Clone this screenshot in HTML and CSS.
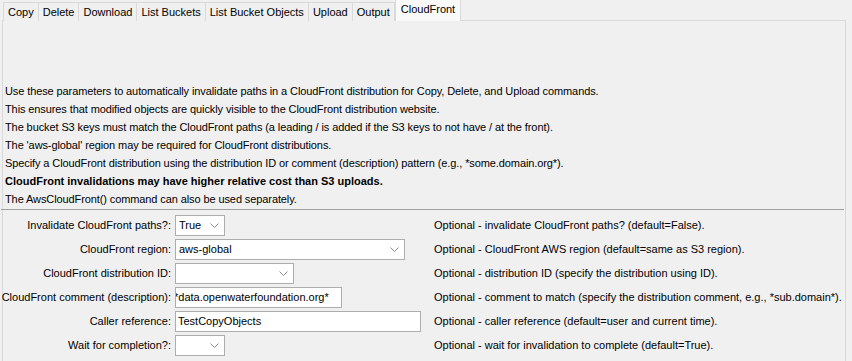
FILE: index.html
```html
<!DOCTYPE html>
<html>
<head>
<meta charset="utf-8">
<link rel="stylesheet" href="styles.css">
</head>
<body>
<div class="tabs">
  <div class="tab">Copy</div>
  <div class="tab">Delete</div>
  <div class="tab">Download</div>
  <div class="tab">List Buckets</div>
  <div class="tab">List Bucket Objects</div>
  <div class="tab">Upload</div>
  <div class="tab">Output</div>
  <div class="tab selected">CloudFront</div>
</div>
<div class="panel">
  <div class="notes">
    <div class="line">Use these parameters to automatically invalidate paths in a CloudFront distribution for Copy, Delete, and Upload commands.</div>
    <div class="line">This ensures that modified objects are quickly visible to the CloudFront distribution website.</div>
    <div class="line">The bucket S3 keys must match the CloudFront paths (a leading / is added if the S3 keys to not have / at the front).</div>
    <div class="line">The 'aws-global' region may be required for CloudFront distributions.</div>
    <div class="line">Specify a CloudFront distribution using the distribution ID or comment (description) pattern (e.g., *some.domain.org*).</div>
    <div class="line bold">CloudFront invalidations may have higher relative cost than S3 uploads.</div>
    <div class="line">The AwsCloudFront() command can also be used separately.</div>
  </div>
  <div class="form">
    <div class="label">Invalidate CloudFront paths?:</div>
    <div class="field"><div class="combo w-small"><span class="val">True</span><svg class="chev" width="9" height="5" viewBox="0 0 9 5"><polyline points="0.5,0.5 4.5,4.5 8.5,0.5" fill="none" stroke="#8c8c8c" stroke-width="1"/></svg></div></div>
    <div class="desc">Optional - invalidate CloudFront paths? (default=False).</div>

    <div class="label">CloudFront region:</div>
    <div class="field"><div class="combo w-region"><span class="val">aws-global</span><svg class="chev" width="9" height="5" viewBox="0 0 9 5"><polyline points="0.5,0.5 4.5,4.5 8.5,0.5" fill="none" stroke="#8c8c8c" stroke-width="1"/></svg></div></div>
    <div class="desc">Optional - CloudFront AWS region (default=same as S3 region).</div>

    <div class="label">CloudFront distribution ID:</div>
    <div class="field"><div class="combo w-dist"><span class="val"></span><svg class="chev" width="9" height="5" viewBox="0 0 9 5"><polyline points="0.5,0.5 4.5,4.5 8.5,0.5" fill="none" stroke="#8c8c8c" stroke-width="1"/></svg></div></div>
    <div class="desc">Optional - distribution ID (specify the distribution using ID).</div>

    <div class="label">CloudFront comment (description):</div>
    <div class="field"><div class="text w-comment"><span class="scrolled">*data.openwaterfoundation.org*</span></div></div>
    <div class="desc">Optional - comment to match (specify the distribution comment, e.g., *sub.domain*).</div>

    <div class="label">Caller reference:</div>
    <div class="field"><div class="text w-caller"><span>TestCopyObjects</span></div></div>
    <div class="desc">Optional - caller reference (default=user and current time).</div>

    <div class="label">Wait for completion?:</div>
    <div class="field"><div class="combo w-small"><span class="val"></span><svg class="chev" width="9" height="5" viewBox="0 0 9 5"><polyline points="0.5,0.5 4.5,4.5 8.5,0.5" fill="none" stroke="#8c8c8c" stroke-width="1"/></svg></div></div>
    <div class="desc">Optional - wait for invalidation to complete (default=True).</div>
  </div>
</div>
</body>
</html>
```
FILE: styles.css
```css
html, body {
  margin: 0;
  padding: 0;
  background: #f0f0f0;
  width: 852px;
  height: 361px;
  overflow: hidden;
  font-family: "Liberation Sans", Arial, sans-serif;
  font-size: 11px;
  color: #000;
}

.tabs {
  display: flex;
  align-items: flex-end;
  height: 21px;
  padding-left: 3px;
  position: relative;
  z-index: 2;
}

.tab {
  height: 18px;
  line-height: 18px;
  padding: 0 4px;
  border: 1px solid #d9d9d9;
  border-bottom: none;
  border-left: none;
  background: #f0f0f0;
  white-space: nowrap;
}

.tab:first-child {
  border-left: 1px solid #d9d9d9;
}

.tab.selected {
  height: 21px;
  line-height: 19px;
  background: #f9f9f9;
  border-left: 1px solid #d9d9d9;
  padding: 0 5px;
}

.panel {
  margin: -1px 6px 0 2px;
  border: 1px solid #d9d9d9;
  border-bottom: none;
  height: 340px;
  position: relative;
  z-index: 1;
}

.notes {
  padding: 61px 0 0 2px;
  height: 127px;
}

.line {
  height: 18px;
  line-height: 18px;
  white-space: nowrap;
  letter-spacing: -0.1px;
}

.line.bold {
  font-weight: bold;
  letter-spacing: 0;
}

.form {
  border-top: 1px solid #a0a0a0;
  margin-left: -2px;
  margin-right: 1px;
  padding-top: 3px;
  display: grid;
  grid-template-columns: 170px 255px 1fr;
  column-gap: 4px;
  grid-auto-rows: 24px;
}

.label {
  text-align: right;
  line-height: 24px;
  white-space: nowrap;
}

.field {
  display: flex;
  align-items: center;
}

.desc {
  line-height: 24px;
  white-space: nowrap;
}

.combo, .text {
  height: 19px;
  background: #fff;
  border: 1px solid #adadad;
  display: flex;
  align-items: center;
  overflow: hidden;
}

.combo .val {
  flex: 1;
  padding-left: 3px;
  white-space: nowrap;
}

.text span {
  padding-left: 2px;
  white-space: nowrap;
}

.text span.scrolled {
  padding-left: 0;
  margin-left: -2px;
}

.chev {
  flex: none;
  margin-right: 5px;
}

.w-small { width: 48px; }
.w-region { width: 228px; }
.w-dist { width: 117px; }
.w-comment { width: 165px; }
.w-caller { width: 244px; }
```
